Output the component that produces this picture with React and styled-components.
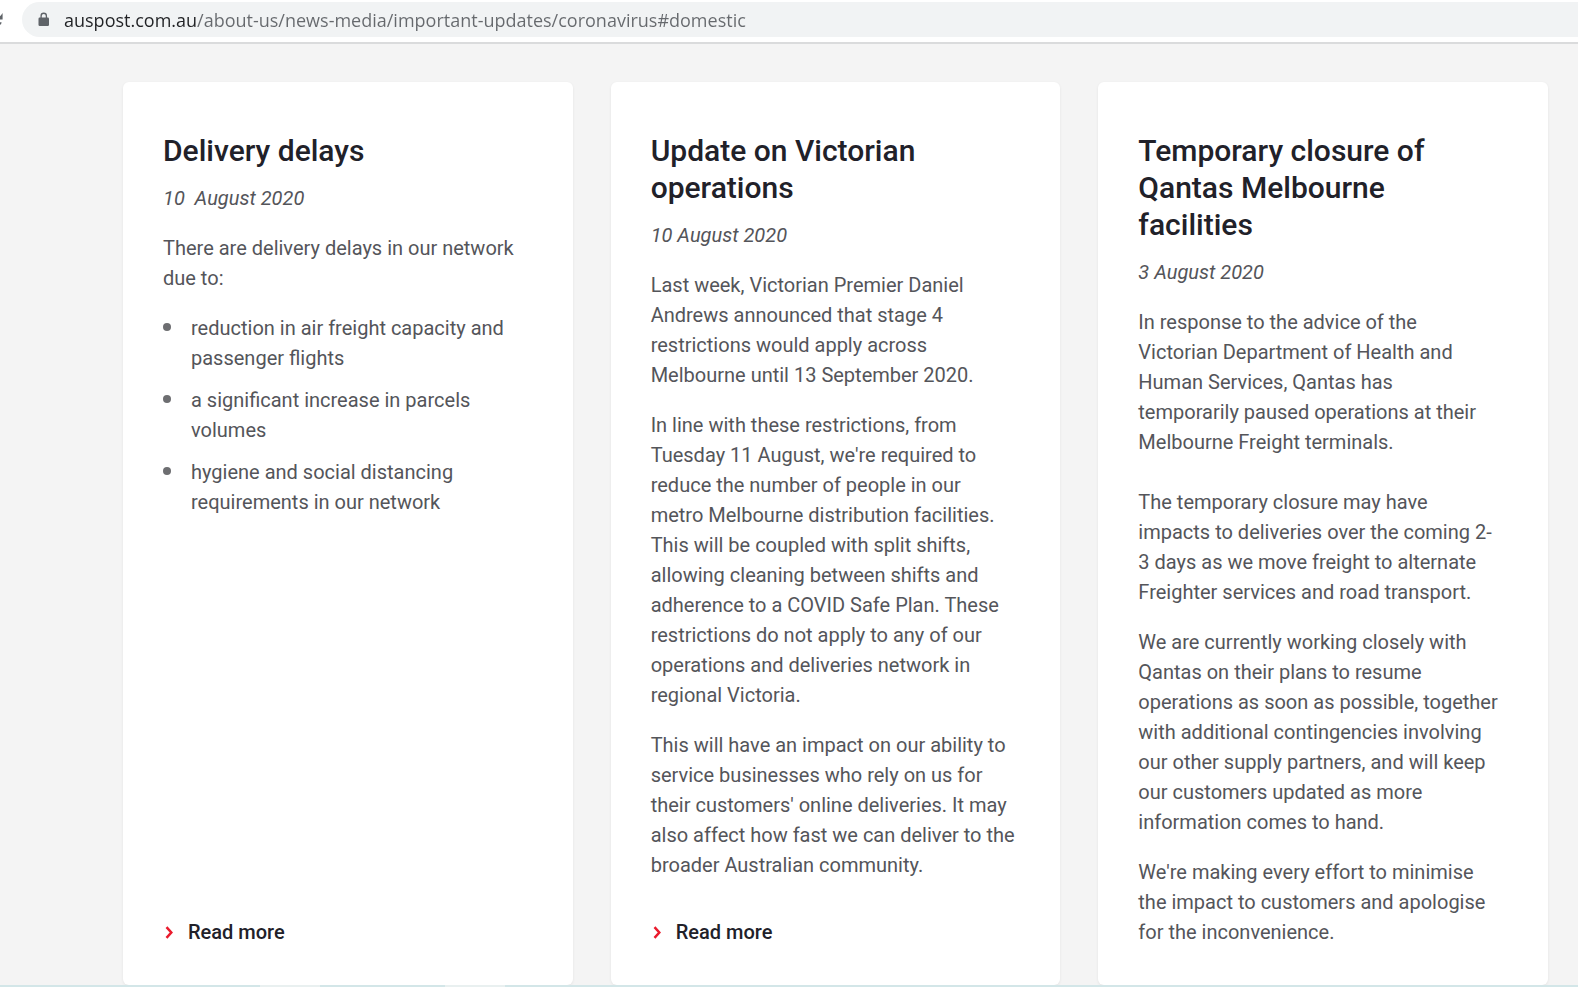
import React from "react";
import styled, { createGlobalStyle } from "styled-components";

const updates = [
  {
    id: "delays",
    title: ["Delivery delays"],
    date: "10 \u00a0August 2020",
    paragraphs: [["There are delivery delays in our network", "due to:"]],
    points: [
      ["reduction in air freight capacity and", "passenger flights"],
      ["a significant increase in parcels", "volumes"],
      ["hygiene and social distancing", "requirements in our network"],
    ],
    link: "#delivery-delays",
  },
  {
    id: "victoria",
    title: ["Update on Victorian", "operations"],
    date: "10 August 2020",
    paragraphs: [
      [
        "Last week, Victorian Premier Daniel",
        "Andrews announced that stage 4",
        "restrictions would apply across",
        "Melbourne until 13 September 2020.",
      ],
      [
        "In line with these restrictions, from",
        "Tuesday 11 August, we're required to",
        "reduce the number of people in our",
        "metro Melbourne distribution facilities.",
        "This will be coupled with split shifts,",
        "allowing cleaning between shifts and",
        "adherence to a COVID Safe Plan. These",
        "restrictions do not apply to any of our",
        "operations and deliveries network in",
        "regional Victoria.",
      ],
      [
        "This will have an impact on our ability to",
        "service businesses who rely on us for",
        "their customers' online deliveries. It may",
        "also affect how fast we can deliver to the",
        "broader Australian community.",
      ],
    ],
    link: "#victorian-operations",
  },
  {
    id: "qantas",
    title: ["Temporary closure of", "Qantas Melbourne", "facilities"],
    date: "3 August 2020",
    paragraphs: [
      [
        "In response to the advice of the",
        "Victorian Department of Health and",
        "Human Services, Qantas has",
        "temporarily paused operations at their",
        "Melbourne Freight terminals.",
        "",
        "The temporary closure may have",
        "impacts to deliveries over the coming 2-",
        "3 days as we move freight to alternate",
        "Freighter services and road transport.",
      ],
      [
        "We are currently working closely with",
        "Qantas on their plans to resume",
        "operations as soon as possible, together",
        "with additional contingencies involving",
        "our other supply partners, and will keep",
        "our customers updated as more",
        "information comes to hand.",
      ],
      [
        "We're making every effort to minimise",
        "the impact to customers and apologise",
        "for the inconvenience.",
      ],
    ],
  },
];

function Lines({ lines }) {
  return lines.map((line, i) => (
    <React.Fragment key={i}>
      {i > 0 && <br />}
      {line}
    </React.Fragment>
  ));
}

function AddressBar() {
  return (
    <Toolbar>
      <ReloadButton type="button" aria-label="Reload">
        <svg width="4" height="14" viewBox="0 0 4 14" aria-hidden="true">
          <path d="M2.6 0v6.6H0V3.2L1.2 2zM0 9.2h1.6L1 11.6H0z" fill="#5f6368" />
        </svg>
      </ReloadButton>
      <Omnibox>
        <svg width="12" height="15" viewBox="0 0 12 15" aria-hidden="true">
          <rect x="0.5" y="5.5" width="10.5" height="8.5" rx="1.2" fill="#5f6368" />
          <path d="M3.1 6V3.9a2.65 2.65 0 0 1 5.3 0V6" fill="none" stroke="#5f6368" strokeWidth="1.3" />
        </svg>
        <Url
          type="text"
          aria-label="Address"
          spellCheck="false"
          defaultValue="auspost.com.au/about-us/news-media/important-updates/coronavirus#domestic"
        />
      </Omnibox>
    </Toolbar>
  );
}

function UpdateCard({ update }) {
  return (
    <Card>
      <Title>
        <Lines lines={update.title} />
      </Title>
      <PostDate>{update.date}</PostDate>
      {update.paragraphs.map((lines, i) => (
        <Paragraph key={i}>
          <Lines lines={lines} />
        </Paragraph>
      ))}
      {update.points && (
        <Points>
          {update.points.map((lines, i) => (
            <Point key={i}>
              <Lines lines={lines} />
            </Point>
          ))}
        </Points>
      )}
      {update.link && (
        <ReadMore href={update.link}>
          <svg width="8" height="13" viewBox="0 0 8 13" aria-hidden="true">
            <path d="M1.5 1.2L6.3 6.5L1.5 11.8" fill="none" stroke="#ea1b2d" strokeWidth="2.5" />
          </svg>
          Read more
        </ReadMore>
      )}
    </Card>
  );
}

function App() {
  return (
    <>
      <GlobalStyle />
      <Page>
        <AddressBar />
        <Cards>
          {updates.map((update) => (
            <UpdateCard key={update.id} update={update} />
          ))}
        </Cards>
        <BottomEdge />
      </Page>
    </>
  );
}

const GlobalStyle = createGlobalStyle`
  * {
    box-sizing: border-box;
  }
  body {
    margin: 0;
    background: #f4f4f4;
    color: #54555a;
    font-family: Roboto, "Liberation Sans", sans-serif;
    font-size: 20px;
    line-height: 30px;
  }
`;

const Page = styled.div`
  display: flex;
  flex-direction: column;
  min-height: 100vh;
`;

const Toolbar = styled.header`
  display: flex;
  align-items: center;
  gap: 18px;
  padding: 2px 0 5px;
  background: white;
  border-bottom: 2px solid #dadbdc;
`;

const ReloadButton = styled.button`
  display: flex;
  padding: 0;
  border: 0;
  background: none;
`;

const Omnibox = styled.div`
  flex: 1;
  display: flex;
  align-items: center;
  gap: 14px;
  height: 35px;
  padding-left: 16px;
  background: #f1f3f4;
  border-radius: 18px 0 0 18px;
`;

const Url = styled.input`
  flex: 1;
  min-width: 0;
  padding: 0;
  border: 0;
  outline: 0;
  font-family: "Open Sans", "Noto Sans", sans-serif;
  font-size: 18px;
  line-height: 30px;
  color: transparent;
  caret-color: #202124;
  /* host name is darker than the rest of the address */
  background: linear-gradient(to right, #202124 132px, #66696d 132px);
  background-clip: text;
`;

const Cards = styled.main`
  flex: 1;
  display: grid;
  grid-template-columns: repeat(3, minmax(0, 1fr));
  gap: 38px;
  padding: 38px 30px 0 123px;
`;

const Card = styled.article`
  display: flex;
  flex-direction: column;
  padding: 50px 36px 38px 40px;
  background: white;
  border-radius: 6px;
  box-shadow: 0 1px 3px rgba(0, 0, 0, 0.07);
`;

const Title = styled.h2`
  margin: 0 0 14px;
  color: #212129;
  font-size: 30px;
  font-weight: 500;
  line-height: 37px;
`;

const PostDate = styled.p`
  margin: 0 0 20px;
  font-style: italic;
`;

const Paragraph = styled.p`
  margin: 0 0 20px;

  &:last-child {
    margin-bottom: 0;
  }
`;

const Points = styled.ul`
  margin: 0;
  padding: 0;
  list-style: none;
`;

const Point = styled.li`
  display: block;
  position: relative;
  margin-bottom: 12px;
  padding-left: 28px;

  &::before {
    content: "";
    position: absolute;
    top: 10px;
    left: 0;
    width: 8px;
    height: 8px;
    border-radius: 50%;
    background: #6d6e71;
  }
`;

const ReadMore = styled.a`
  display: flex;
  align-items: center;
  gap: 15px;
  margin-top: auto;
  padding-left: 2px;
  color: #212129;
  font-weight: 500;
  text-decoration: none;
`;

const BottomEdge = styled.div`
  height: 2px;
  background: linear-gradient(
    to right,
    #d3e6e8 260px,
    #e9f0f0 260px 320px,
    #d3e6e8 320px 445px,
    #e9f0f0 445px 505px,
    #d3e6e8 505px
  );
`;

export default App;
